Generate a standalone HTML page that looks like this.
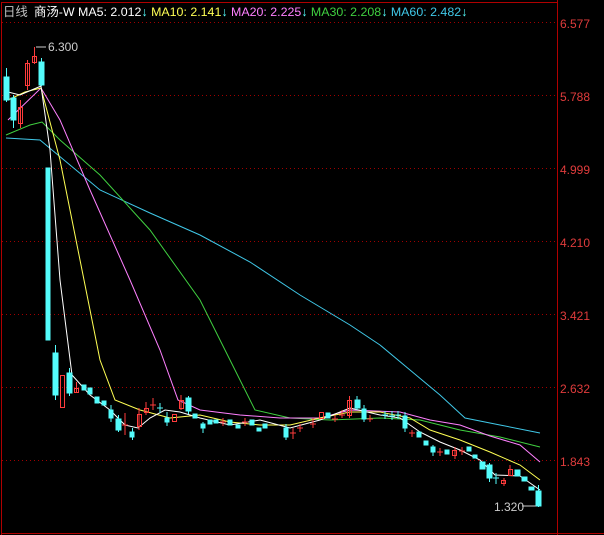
<!DOCTYPE html><html><head><style>body{margin:0;background:#000;overflow:hidden}svg{display:block}text{font-family:"Liberation Sans","Noto Sans CJK SC",sans-serif;font-size:12px}.h{font-size:12.4px}</style></head><body>
<svg width="604" height="535" viewBox="0 0 604 535" xmlns="http://www.w3.org/2000/svg">
<rect width="604" height="535" fill="#000"/>
<g stroke="#b00000" stroke-width="1" fill="none">
<line x1="1.5" y1="2" x2="1.5" y2="535"/><line x1="1" y1="2.5" x2="557" y2="2.5"/><line x1="557.5" y1="0" x2="557.5" y2="535"/><line x1="1" y1="533.5" x2="604" y2="533.5"/>
</g>
<g stroke="#a00000" stroke-dasharray="1,3" stroke-width="1">
<line x1="2" y1="22.5" x2="557" y2="22.5"/><line x1="2" y1="95.5" x2="557" y2="95.5"/><line x1="2" y1="168.5" x2="557" y2="168.5"/><line x1="2" y1="241.5" x2="557" y2="241.5"/><line x1="2" y1="314.5" x2="557" y2="314.5"/><line x1="2" y1="387.5" x2="557" y2="387.5"/><line x1="2" y1="460.5" x2="557" y2="460.5"/>
</g>
<g fill="#e03c3c"><text x="560" y="28">6.577</text><text x="560" y="101">5.788</text><text x="560" y="174">4.999</text><text x="560" y="247">4.210</text><text x="560" y="320">3.421</text><text x="560" y="393">2.632</text><text x="560" y="466">1.843</text></g>
<text class="h" x="3" y="16" fill="#c0c0c0">日线</text>
<text class="h" x="34" y="16" fill="#fff">商汤-W MA5: 2.012<tspan fill="#54fcfc">↓</tspan> <tspan fill="#ffff54">MA10: 2.141</tspan><tspan fill="#54fcfc">↓</tspan> <tspan fill="#ff80ff">MA20: 2.225</tspan><tspan fill="#54fcfc">↓</tspan> <tspan fill="#40d040">MA30: 2.208</tspan><tspan fill="#54fcfc">↓</tspan> <tspan fill="#40c8e8">MA60: 2.482</tspan><tspan fill="#54fcfc">↓</tspan></text>
<g fill="none" stroke-width="1">
<polyline stroke="#40c8e8" points="6,138 40,140 70,165 100,190 150,213 200,235 250,262 300,295 350,325 380,345 410,370 440,395 465,418 500,425 540,433"/>
<polyline stroke="#40d040" points="6,135 30,125 42,122 60,140 100,175 150,230 200,300 230,360 255,410 290,418 330,420 380,418 420,420 460,430 500,437 540,447"/>
<polyline stroke="#ff80ff" points="8,120 41,88 60,120 90,190 130,280 160,350 178,400 200,410 240,415 280,418 320,418 350,410 400,412 430,420 460,425 490,436 520,445 540,462"/>
<polyline stroke="#ffff54" points="8,100 25,92 41,88 60,160 80,260 100,360 115,400 140,410 170,418 200,415 230,422 260,425 290,425 320,418 350,412 380,412 410,418 430,430 460,440 490,452 520,465 540,480"/>
<polyline stroke="#fff" points="8,92 20,95 41,86 50,150 60,280 72,375 90,395 110,410 125,425 138,428 150,418 165,410 180,412 200,418 230,425 260,420 290,428 320,420 350,408 380,415 400,418 420,432 440,442 460,450 480,460 495,475 520,476 540,490"/>
</g>
<g fill="#54fcfc" stroke="#54fcfc">
<line x1="6.5" y1="68" x2="6.5" y2="102"/><rect x="4" y="77" width="5" height="23"/>
<line x1="13.5" y1="95" x2="13.5" y2="128"/><rect x="11" y="98" width="5" height="22"/>
<line x1="41.5" y1="58" x2="41.5" y2="86"/><rect x="39" y="62" width="5" height="23"/>
<rect x="46" y="168" width="4" height="172"/>
<line x1="55.5" y1="345" x2="55.5" y2="400"/><rect x="53" y="353" width="5" height="42"/>
<line x1="69.5" y1="368" x2="69.5" y2="396"/><rect x="67" y="373" width="5" height="20"/>
<rect x="82" y="385" width="4" height="5"/><rect x="88" y="388" width="4" height="6"/><rect x="95" y="397" width="4" height="6"/><rect x="102" y="401" width="4" height="4"/>
<line x1="111" y1="405" x2="111" y2="422"/><rect x="109" y="410" width="4" height="8"/>
<line x1="118.5" y1="415" x2="118.5" y2="432"/><rect x="116" y="419" width="5" height="11"/>
<line x1="132.5" y1="428" x2="132.5" y2="440"/><rect x="130" y="432" width="4" height="5"/>
<line x1="160" y1="403" x2="160" y2="413"/><line x1="157" y1="408" x2="163" y2="408"/>
<line x1="167" y1="412" x2="167" y2="426"/><rect x="165" y="418" width="4" height="4"/>
<line x1="188.5" y1="396" x2="188.5" y2="414"/><rect x="186" y="398" width="5" height="13"/>
<rect x="193" y="414" width="4" height="4"/><line x1="203" y1="422" x2="203" y2="433"/><rect x="201" y="424" width="4" height="4"/>
<rect x="208" y="420" width="4" height="4"/><rect x="214" y="420" width="4" height="3"/><rect x="228" y="420" width="4" height="5"/><rect x="236" y="425" width="4" height="3"/><rect x="250" y="420" width="4" height="5"/><rect x="257" y="428" width="4" height="3"/><rect x="263" y="424" width="4" height="4"/>
<line x1="286" y1="424" x2="286" y2="440"/><rect x="284" y="428" width="4" height="9"/>
<rect x="326" y="413" width="4" height="5"/>
<line x1="357" y1="396" x2="357" y2="410"/><rect x="355" y="400" width="5" height="8"/>
<line x1="364" y1="405" x2="364" y2="422"/><rect x="362" y="409" width="4" height="10"/>
<line x1="385" y1="411" x2="385" y2="419"/><line x1="382" y1="415" x2="388" y2="415"/><line x1="392" y1="411" x2="392" y2="420"/><line x1="389" y1="416" x2="395" y2="416"/><line x1="398" y1="411" x2="398" y2="419"/><line x1="395" y1="415" x2="401" y2="415"/>
<line x1="405" y1="412" x2="405" y2="432"/><rect x="403" y="416" width="4" height="12"/>
<rect x="417" y="432" width="4" height="5"/><rect x="424" y="441" width="4" height="4"/><line x1="433" y1="445" x2="433" y2="456"/><rect x="431" y="447" width="4" height="5"/>
<rect x="445" y="450" width="4" height="4"/><rect x="467" y="447" width="4" height="4"/><rect x="473" y="455" width="4" height="3"/><rect x="480" y="462" width="5" height="7"/>
<line x1="489.5" y1="463" x2="489.5" y2="482"/><rect x="487" y="465" width="5" height="13"/>
<line x1="496" y1="473" x2="496" y2="484"/><line x1="493" y1="478" x2="499" y2="478"/>
<rect x="515" y="470" width="5" height="6"/><rect x="522" y="477" width="5" height="4"/><rect x="529" y="487" width="5" height="3"/>
<line x1="538.5" y1="485" x2="538.5" y2="507"/><rect x="536" y="491" width="5" height="15"/>
</g>
<g fill="none" stroke="#ff3c3c">
<line x1="20.5" y1="100" x2="20.5" y2="128"/><rect x="18.5" y="107.5" width="4" height="16"/>
<line x1="27.5" y1="60" x2="27.5" y2="90"/><rect x="25.5" y="63.5" width="4" height="22"/>
<line x1="34.5" y1="47" x2="34.5" y2="64"/><rect x="32.5" y="56.5" width="4" height="6"/>
<rect x="60.5" y="375.5" width="4" height="32"/>
<line x1="76.5" y1="382" x2="76.5" y2="392"/><rect x="74.5" y="388.5" width="4" height="4"/>
<line x1="125" y1="413" x2="125" y2="435"/><line x1="122" y1="425" x2="128" y2="425"/>
<line x1="139" y1="408" x2="139" y2="430"/><rect x="137.5" y="414.5" width="4" height="12"/>
<line x1="146" y1="402" x2="146" y2="415"/><rect x="144.5" y="408.5" width="4" height="4"/>
<line x1="153" y1="398" x2="153" y2="410"/><line x1="150" y1="405" x2="156" y2="405"/>
<rect x="172.5" y="414.5" width="4" height="7"/>
<line x1="181" y1="395" x2="181" y2="410"/><rect x="179.5" y="400.5" width="4" height="8"/>
<line x1="223" y1="418" x2="223" y2="426"/><line x1="220" y1="422" x2="226" y2="422"/>
<line x1="245" y1="418" x2="245" y2="426"/><line x1="242" y1="422" x2="248" y2="422"/>
<line x1="293" y1="428" x2="293" y2="439"/><line x1="290" y1="433" x2="296" y2="433"/>
<line x1="300" y1="424" x2="300" y2="432"/><line x1="297" y1="428" x2="303" y2="428"/>
<line x1="313" y1="418" x2="313" y2="428"/><line x1="310" y1="424" x2="316" y2="424"/>
<rect x="319.5" y="412.5" width="4" height="6"/>
<line x1="335" y1="415" x2="335" y2="422"/><line x1="332" y1="419" x2="338" y2="419"/>
<line x1="342" y1="410" x2="342" y2="418"/><line x1="339" y1="415" x2="345" y2="415"/>
<line x1="349.5" y1="396" x2="349.5" y2="418"/><rect x="347.5" y="400.5" width="4" height="15"/>
<line x1="370" y1="415" x2="370" y2="422"/><line x1="367" y1="419" x2="373" y2="419"/>
<line x1="412" y1="430" x2="412" y2="437"/><line x1="409" y1="433" x2="415" y2="433"/>
<line x1="440" y1="448" x2="440" y2="456"/><line x1="437" y1="452" x2="443" y2="452"/>
<line x1="455" y1="447" x2="455" y2="459"/><rect x="452.5" y="450.5" width="4" height="5"/>
<line x1="462" y1="447" x2="462" y2="455"/><line x1="459" y1="451" x2="465" y2="451"/>
<line x1="504" y1="478" x2="504" y2="486"/><rect x="501.5" y="480.5" width="4" height="3"/>
<line x1="510" y1="465" x2="510" y2="476"/><rect x="508.5" y="469.5" width="4" height="6"/>
</g>
<g stroke="#ccc" fill="#ccc"><line x1="36" y1="47" x2="46" y2="47"/><line x1="522" y1="506" x2="536" y2="506"/></g>
<text x="48" y="51" fill="#ccc">6.300</text>
<text x="494" y="511" fill="#ccc">1.320</text>
</svg>
</body></html>
